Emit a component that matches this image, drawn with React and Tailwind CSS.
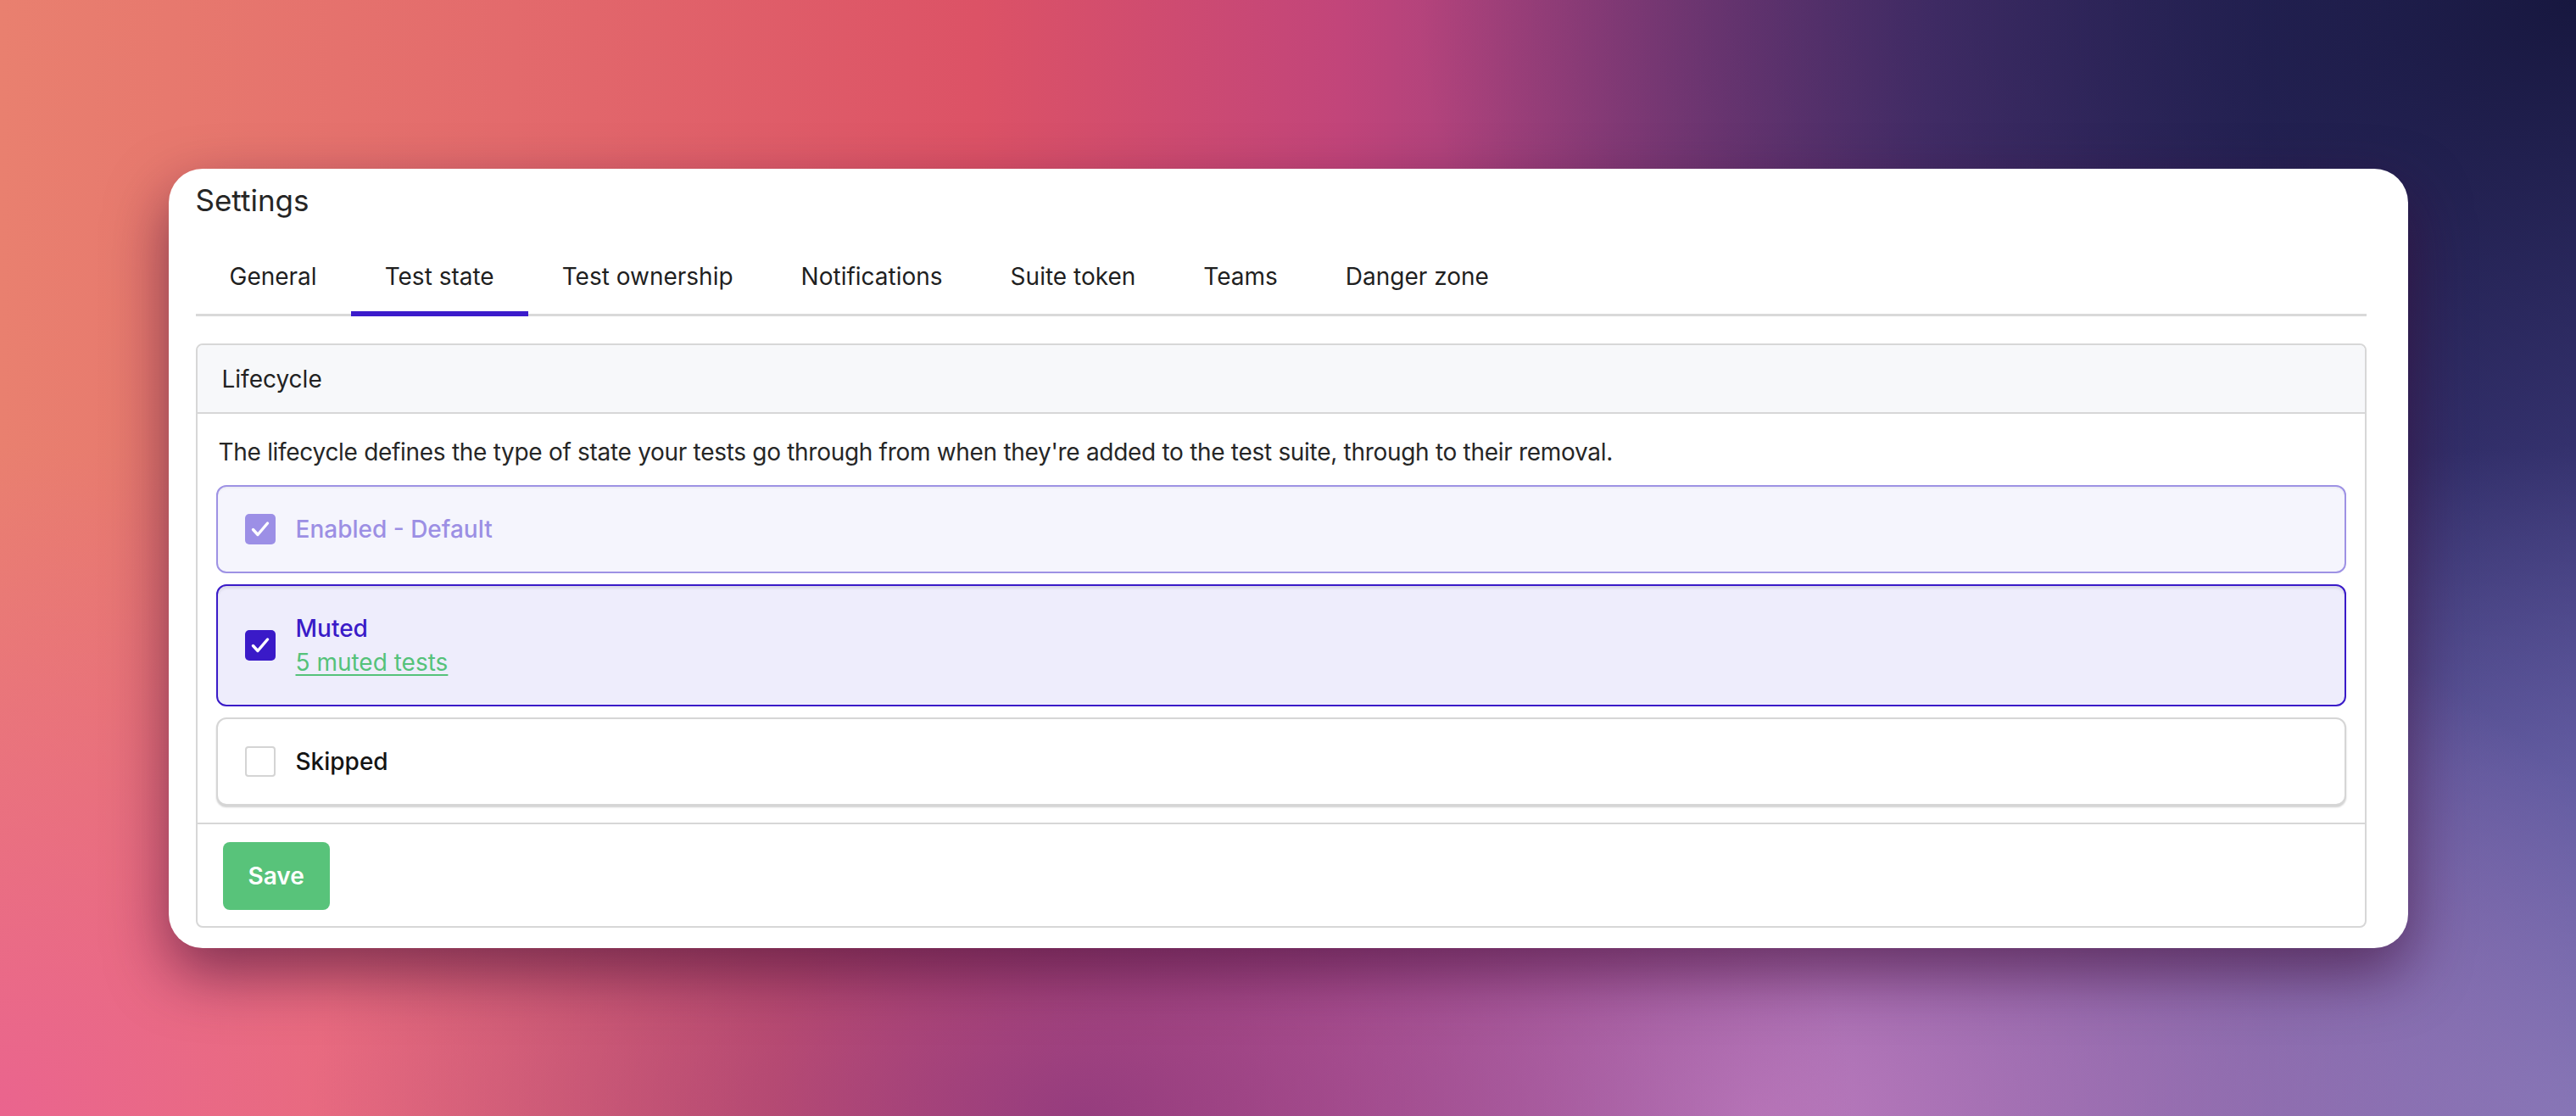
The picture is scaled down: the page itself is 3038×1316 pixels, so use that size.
import { useState } from "react"

const tabs = ["General", "Test state", "Test ownership", "Notifications", "Suite token", "Teams", "Danger zone"]

function Check({ className }) {
  return (
    <svg viewBox="0 0 36 36" className={className}>
      <polyline points="9.5,18.5 15,24.5 26.5,11" fill="none" stroke="white" strokeWidth="3.4" strokeLinecap="round" strokeLinejoin="round" />
    </svg>
  )
}

function LifecycleOption({ variant, label, children }) {
  if (variant === "disabled") {
    return (
      <div className="flex items-center gap-6 rounded-[12px] border-2 border-[#9e92e4] bg-[#f5f5fd] py-[30px] pl-8 shadow-[inset_0_2px_2px_rgba(0,0,0,0.04)]">
        <div className="flex h-9 w-9 items-center justify-center rounded-[5px] bg-[#9c8fe6]">
          <Check className="h-9 w-9" />
        </div>
        <div className="text-[28px] leading-[40px] font-medium text-[#9c8fe4]">{label}</div>
      </div>
    )
  }
  if (variant === "checked") {
    return (
      <div className="flex items-center gap-6 rounded-[12px] border-2 border-[#3a1bc8] bg-[#eeedfc] py-[30px] pl-8 shadow-[inset_0_3px_3px_rgba(0,0,0,0.08)]">
        <div className="flex h-9 w-9 items-center justify-center rounded-[5px] bg-[#3a1ac8]">
          <Check className="h-9 w-9" />
        </div>
        <div className="flex flex-col">
          <div className="text-[28px] leading-[40px] font-medium text-[#3a1bc8]">{label}</div>
          {children}
        </div>
      </div>
    )
  }
  return (
    <div className="flex items-center gap-6 rounded-[12px] border-2 border-[#d6d6d6] bg-white py-[30px] pl-8 shadow-[0_2px_2px_rgba(0,0,0,0.18)]">
      <div className="h-9 w-9 rounded-[4px] border-2 border-[#d4d4d4] bg-white" />
      <div className="text-[28px] leading-[40px] font-medium text-[#141414]">{label}</div>
    </div>
  )
}

export default function App() {
  const [active, setActive] = useState("Test state")

  return (
    <div className="flex min-h-screen w-full items-center justify-center font-['Inter',sans-serif] bg-[radial-gradient(ellipse_30%_45%_at_42%_100%,rgba(140,55,125,0.85)_0%,rgba(140,55,125,0)_100%),radial-gradient(ellipse_38%_55%_at_68%_100%,rgba(190,125,192,0.95)_0%,rgba(190,125,192,0)_100%),radial-gradient(ellipse_40%_60%_at_100%_100%,rgba(125,116,180,1)_0%,rgba(125,116,180,0)_100%),radial-gradient(ellipse_45%_70%_at_100%_0%,#17173f_0%,rgba(23,23,63,0)_100%),radial-gradient(ellipse_30%_60%_at_0%_100%,rgba(234,100,142,1)_0%,rgba(234,100,142,0)_100%),linear-gradient(to_right,#e9806f_0%,#e36a6c_20%,#dc5266_38%,#c2457a_52%,#98407f_62%,#5e3a80_75%,#3b3578_88%,#4a4590_100%)]">
      <div className="w-[2641px] rounded-[40px] bg-white pt-3 pb-6 pl-8 shadow-[0_30px_70px_rgba(60,10,50,0.6)]">
        <div className="w-[2560px]">
          <h1 className="text-[35px] leading-[51px] font-normal text-[#262626]">Settings</h1>

          <div className="mt-[23px] flex border-b-[3px] border-[#d9d9d9]">
            {tabs.map((tab) => (
              <button
                key={tab}
                onClick={() => setActive(tab)}
                className={
                  tab === active
                    ? "-mb-[3px] border-b-[6px] border-[#3b1bcb] px-10 pt-5 pb-5 text-[28px] leading-[42px] text-[#1f1f1f]"
                    : "-mb-[3px] border-b-[6px] border-transparent px-10 pt-5 pb-5 text-[28px] leading-[42px] text-[#1f1f1f]"
                }
              >
                {tab}
              </button>
            ))}
          </div>

          <div className="mt-8 overflow-hidden rounded-[8px] border-2 border-[#d7d7d7]">
            <div className="border-b-2 border-[#d7d7d7] bg-[#f7f8fa] px-[29px] pt-5 pb-[19px] text-[28px] leading-[40px] text-[#222]">
              Lifecycle
            </div>

            <div className="px-[22px] pt-[25px] pb-5">
              <p className="mb-[19px] px-[3px] text-[28px] leading-[40px] tracking-[-0.3px] text-[#262626]">
                The lifecycle defines the type of state your tests go through from when they're added to the test suite, through to their removal.
              </p>
              <div className="flex flex-col gap-[13px]">
                <LifecycleOption variant="disabled" label="Enabled - Default" />
                <LifecycleOption variant="checked" label="Muted">
                  <a href="#" className="text-[28px] leading-[40px] text-[#55c27a] underline decoration-2 underline-offset-[4px]">
                    5 muted tests
                  </a>
                </LifecycleOption>
                <LifecycleOption variant="empty" label="Skipped" />
              </div>
            </div>

            <div className="border-t-2 border-[#d7d7d7] px-[30px] pt-[21px] pb-[19px]">
              <button className="h-20 rounded-[8px] bg-[#58c37a] px-[30px] text-[28px] font-semibold text-white">Save</button>
            </div>
          </div>
        </div>
      </div>
    </div>
  )
}
